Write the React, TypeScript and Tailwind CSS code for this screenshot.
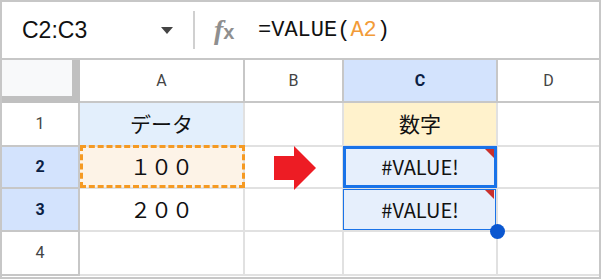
import React from "react"

const HEAD = "border-r-2 border-b-2 border-[#c7c7c7]"
const GRID = "border-r-2 border-b-2 border-[#e1e1e1]"
const CJK = "font-['Noto_Sans_CJK_JP',sans-serif]"

function ErrorFlag() {
  return (
    <svg className="absolute top-0 right-0" width="9" height="9" viewBox="0 0 9 9">
      <polygon points="0,0 9,0 9,9" fill="#c9302c" />
    </svg>
  )
}

export default function App() {
  return (
    <div className="w-[601px] h-[279px] overflow-hidden border-2 border-[#c7c7c7] bg-white font-['Roboto',sans-serif]">
      {/* Formula bar */}
      <div className="flex h-[58px] items-center border-b-2 border-[#c7c7c7]">
        <div className="flex w-[191px] items-center justify-between pl-[20px] pr-[20px]">
          <span className="font-['Liberation_Sans',sans-serif] text-[23px] text-[#111]">C2:C3</span>
          <svg width="12" height="7" viewBox="0 0 12 7">
            <polygon points="0,0 12,0 6,7" fill="#444" />
          </svg>
        </div>
        <div className="h-[38px] w-[2px] bg-[#d0d0d0]" />
        <div className="ml-[19px] flex w-[30px] items-baseline text-[#8f8f8f]">
          <span className="font-['Liberation_Serif',serif] text-[28px] font-bold italic">f</span>
          <span className="font-['Liberation_Sans',sans-serif] text-[20px] font-bold">x</span>
        </div>
        <div className="ml-[14px] font-['Liberation_Mono',monospace] text-[22px] text-[#111]">
          =VALUE(<span className="text-[#f29b38]">A2</span>)
        </div>
      </div>

      {/* Column headers */}
      <div className="flex h-[43px] text-[16px] text-[#444]">
        <div className="w-[78px] border-r-8 border-b-[7px] border-[#c0c0c0] bg-[#f8f9fa]" />
        <div className={`flex w-[165px] items-center justify-center ${HEAD}`}>A</div>
        <div className={`flex w-[99px] items-center justify-center ${HEAD}`}>B</div>
        <div className={`flex w-[154px] items-center justify-center bg-[#d3e3fd] font-bold text-[#0b1f45] ${HEAD}`}>C</div>
        <div className="flex flex-1 items-center justify-center border-b-2 border-[#c7c7c7]">D</div>
      </div>

      {/* Row 1 */}
      <div className="flex h-[44px]">
        <div className={`flex w-[78px] items-center justify-center text-[16px] text-[#444] ${HEAD}`}>1</div>
        <div className={`flex w-[165px] items-center justify-center bg-[#e3effc] text-[21px] text-[#111] ${CJK} ${GRID}`}>データ</div>
        <div className={`w-[99px] ${GRID}`} />
        <div className={`flex w-[154px] items-center justify-center bg-[#fff2cc] text-[21px] text-[#111] ${CJK} ${GRID}`}>数字</div>
        <div className="flex-1 border-b-2 border-[#e1e1e1]" />
      </div>

      {/* Row 2 */}
      <div className="flex h-[42px]">
        <div className={`flex w-[78px] items-center justify-center bg-[#d3e3fd] text-[16px] font-bold text-[#0b1f45] ${HEAD}`}>2</div>
        <div className={`relative flex w-[165px] items-center justify-center bg-[#fdf3e7] text-[21px] text-[#111] ${CJK} ${GRID}`}>
          １００
          <div className="absolute -top-[2px] left-0 -right-[2px] -bottom-[1px] border-[3px] border-dashed border-[#f59a23]" />
        </div>
        <div className={`relative w-[99px] ${GRID}`}>
          <svg className="absolute left-[29px] -top-[1px]" width="42" height="45" viewBox="0 0 42 45">
            <polygon points="0,10 20,10 20,0 42,22 20,44 20,34 0,34" fill="#ed1c24" />
          </svg>
        </div>
        <div className={`relative flex w-[154px] items-center justify-center bg-[#e6effc] text-[20px] text-[#111] ${CJK} ${GRID}`}>
          #VALUE!
          <div className="absolute -top-[1px] -left-[1px] -right-[1px] -bottom-[1px] border-[3px] border-[#1a73e8]" />
          <div className="absolute top-[2px] right-[2px] h-[9px] w-[9px]">
            <ErrorFlag />
          </div>
        </div>
        <div className="flex-1 border-b-2 border-[#e1e1e1]" />
      </div>

      {/* Row 3 */}
      <div className="flex h-[43px]">
        <div className={`flex w-[78px] items-center justify-center bg-[#d3e3fd] text-[16px] font-bold text-[#0b1f45] ${HEAD}`}>3</div>
        <div className={`flex w-[165px] items-center justify-center text-[21px] text-[#111] ${CJK} ${GRID}`}>２００</div>
        <div className={`w-[99px] ${GRID}`} />
        <div className={`relative flex w-[154px] items-center justify-center bg-[#e6effc] text-[20px] text-[#111] ${CJK} ${GRID}`}>
          #VALUE!
          <div className="absolute top-0 -left-[1px] right-0 bottom-0 border border-[#1a73e8]" />
          <div className="absolute top-[1px] right-[2px] h-[9px] w-[9px]">
            <ErrorFlag />
          </div>
          <div className="absolute -right-[9px] -bottom-[9px] h-[15px] w-[15px] rounded-full bg-[#0b57d0]" />
        </div>
        <div className="flex-1 border-b-2 border-[#e1e1e1]" />
      </div>

      {/* Row 4 */}
      <div className="flex h-[44px]">
        <div className={`flex w-[78px] items-center justify-center text-[16px] text-[#444] ${HEAD}`}>4</div>
        <div className={`w-[165px] ${GRID}`} />
        <div className={`w-[99px] ${GRID}`} />
        <div className={`w-[154px] ${GRID}`} />
        <div className="flex-1 border-b-2 border-[#e1e1e1]" />
      </div>
    </div>
  )
}
